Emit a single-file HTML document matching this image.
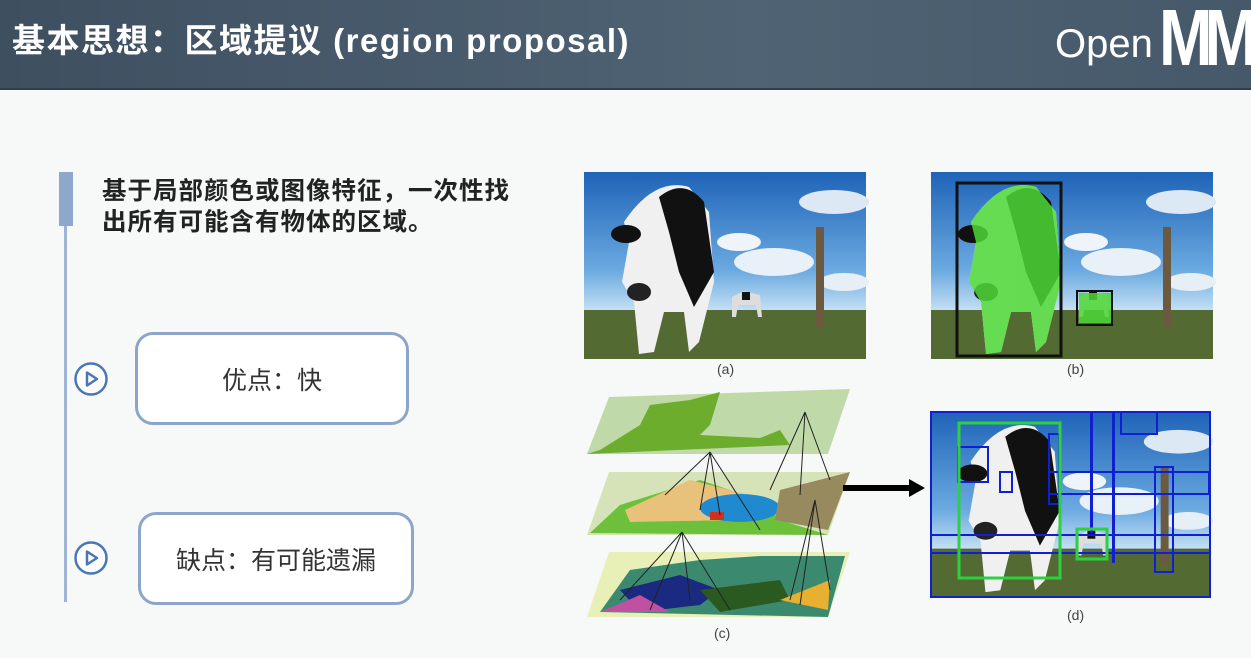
<!DOCTYPE html><html><head><meta charset="utf-8"><style>
body{margin:0;width:1251px;height:658px;overflow:hidden;background:#f7f8f8;font-family:"Liberation Sans","Noto Sans CJK SC",sans-serif;position:relative}
.hd{position:absolute;left:0;top:0;width:1251px;height:88px;background:linear-gradient(90deg,#3e4f60,#4f6374 60%,#46596a);border-bottom:2px solid #2f3d4a}
.t{position:absolute;left:12px;top:14px;color:#fff;font-weight:bold;font-size:33px;letter-spacing:1.5px}
.logo{position:absolute;left:1055px;top:22px;color:#fff;font-size:40px;white-space:nowrap}
.bar{position:absolute;left:59px;top:172px;width:14px;height:54px;background:#8ea7cd}
.line{position:absolute;left:64px;top:226px;width:3px;height:376px;background:#9fb4d4}
.p{position:absolute;left:102px;top:176px;font-size:24.5px;font-weight:bold;color:#222;line-height:31px;letter-spacing:1px}
.box{position:absolute;border:3px solid #8ea5cb;border-radius:18px;background:#fff;font-size:25px;color:#333;display:flex;align-items:center;justify-content:center}
.lb{position:absolute;font-size:14px;color:#444}
</style></head><body>
<div class="hd"><div class="t">基本思想：区域提议 (region proposal)</div><div class="logo">Open<span style="font-weight:bold;font-size:80px;position:absolute;left:104px;top:-30px;letter-spacing:-10px;transform:scaleX(0.8);transform-origin:left">MM</span></div></div>
<div class="bar"></div><div class="line"></div>
<div class="p">基于局部颜色或图像特征，一次性找<br>出所有可能含有物体的区域。</div>
<svg style="position:absolute;left:74px;top:362px" width="34" height="34"><circle cx="17" cy="17" r="15.5" fill="#fff" stroke="#4a76b8" stroke-width="2.5"/><path d="M13 10.5 L23 17 L13 23.5 Z" fill="none" stroke="#4a76b8" stroke-width="2.5" stroke-linejoin="round"/></svg>
<svg style="position:absolute;left:74px;top:541px" width="34" height="34"><circle cx="17" cy="17" r="15.5" fill="#fff" stroke="#4a76b8" stroke-width="2.5"/><path d="M13 10.5 L23 17 L13 23.5 Z" fill="none" stroke="#4a76b8" stroke-width="2.5" stroke-linejoin="round"/></svg>
<div class="box" style="left:135px;top:332px;width:268px;height:87px">优点：快</div>
<div class="box" style="left:138px;top:512px;width:270px;height:87px">缺点：有可能遗漏</div>
<svg width="1251" height="658" style="position:absolute;left:0;top:0">
<defs>
<linearGradient id="sk" x1="0" y1="0" x2="0" y2="1"><stop offset="0" stop-color="#1f63b8"/><stop offset="0.7" stop-color="#6aa9e0"/><stop offset="1" stop-color="#c8e2f4"/></linearGradient>
<g id="sc">
<rect width="282" height="140" fill="url(#sk)"/>
<ellipse cx="190" cy="90" rx="40" ry="14" fill="#e8f0f8"/><ellipse cx="250" cy="30" rx="35" ry="12" fill="#dce8f4"/><ellipse cx="155" cy="70" rx="22" ry="9" fill="#eef4fa"/><ellipse cx="260" cy="110" rx="25" ry="9" fill="#e6eef6"/>
<rect y="138" width="282" height="49" fill="#536b32"/>
<rect x="232" y="55" width="8" height="100" fill="#6b5a40"/>
<path d="M40 50 Q70 5 105 15 L125 40 L130 110 L115 170 L105 180 L100 140 L80 140 L70 180 L55 182 L50 130 L38 110 L45 70 Z" fill="#f0f0f0"/>
<path d="M75 25 Q100 5 120 30 L130 100 L110 135 L95 100 L85 60 Z" fill="#111"/>
<ellipse cx="42" cy="62" rx="15" ry="9" fill="#111"/><ellipse cx="55" cy="120" rx="12" ry="9" fill="#222"/>
<path d="M148 125 l12-6 l16 4 l2 22 h-4 l-2-12 h-18 l-2 12 h-4 Z" fill="#ddd"/><rect x="158" y="120" width="8" height="8" fill="#111"/>
</g></defs>
<use href="#sc" x="584" y="172"/>
<use href="#sc" x="931" y="172"/>
<g fill="#4cd836" opacity="0.85"><path d="M971 222 Q1001 177 1036 187 L1056 212 L1061 282 L1046 342 L1036 352 L1031 312 L1011 312 L1001 352 L986 354 L981 302 L969 282 L976 242 Z"/><rect x="1079" y="293" width="32" height="30"/></g>
<rect x="957" y="183" width="104" height="173" fill="none" stroke="#111" stroke-width="3"/>
<rect x="1077" y="291" width="35" height="34" fill="none" stroke="#111" stroke-width="2"/>
<use href="#sc" transform="translate(931,412) scale(0.99,0.99)"/>
<g fill="none" stroke="#1020d0" stroke-width="2"><rect x="931" y="412" width="279" height="185"/><rect x="958" y="447" width="30" height="35"/><rect x="1000" y="472" width="12" height="20"/><rect x="1113" y="412" width="1" height="150"/><rect x="1121" y="412" width="36" height="22"/><rect x="1049" y="434" width="10" height="70"/><rect x="1049" y="472" width="160" height="22"/><rect x="931" y="535" width="279" height="18"/><rect x="1155" y="467" width="18" height="105"/><rect x="1091" y="412" width="1" height="120"/></g>
<g fill="none" stroke="#2cd040" stroke-width="3"><rect x="959" y="423" width="101" height="155"/><rect x="1077" y="529" width="30" height="30"/></g>
<polygon points="609,397 850,389 828,454 587,454" fill="#bfdaa8"/>
<path d="M600 450 L640 425 L650 405 L690 400 L720 392 L710 425 L700 435 L760 438 L780 430 L790 445 L587 454 Z" fill="#6cad2e"/>
<polygon points="609,472 850,472 828,535 587,535" fill="#d6e2b8"/>
<path d="M590 533 L620 505 L700 480 L760 500 L780 520 L828 535 Z" fill="#6cc03a"/>
<path d="M625 510 L690 480 L770 500 L740 520 L630 522 Z" fill="#e8c27a"/>
<ellipse cx="740" cy="508" rx="40" ry="14" fill="#1f8ad0"/><rect x="710" y="512" width="14" height="8" fill="#d03020"/>
<path d="M780 490 L850 472 L828 530 L775 520 Z" fill="#978a5e"/>
<polygon points="609,552 850,552 828,617 587,617" fill="#e8f0b8"/>
<path d="M600 612 L630 570 L700 560 L760 556 L845 556 L828 617 Z" fill="#3b8a70"/>
<path d="M620 590 L680 575 L720 590 L700 605 L640 612 Z" fill="#1a2a80"/><path d="M700 590 L780 580 L790 600 L720 612 Z" fill="#2b5a20"/><path d="M600 612 L640 595 L670 612 Z" fill="#c050a0"/><path d="M780 600 L830 580 L828 610 Z" fill="#e8b030"/>
<g stroke="#222" stroke-width="1"><path d="M710 452 L665 495 M710 452 L700 510 M710 452 L720 515 M710 452 L760 530 M805 412 L770 490 M805 412 L800 495 M805 412 L830 480 M682 532 L620 600 M682 532 L650 610 M682 532 L690 600 M682 532 L730 610 M815 500 L790 600 M815 500 L800 605 M815 500 L830 590"/></g>
<path d="M843 488 H912" stroke="#000" stroke-width="6"/><polygon points="909,479 925,488 909,497" fill="#000"/>
</svg>
<div class="lb" style="left:717px;top:361px">(a)</div>
<div class="lb" style="left:1067px;top:361px">(b)</div>
<div class="lb" style="left:714px;top:625px">(c)</div>
<div class="lb" style="left:1067px;top:607px">(d)</div>
</body></html>
